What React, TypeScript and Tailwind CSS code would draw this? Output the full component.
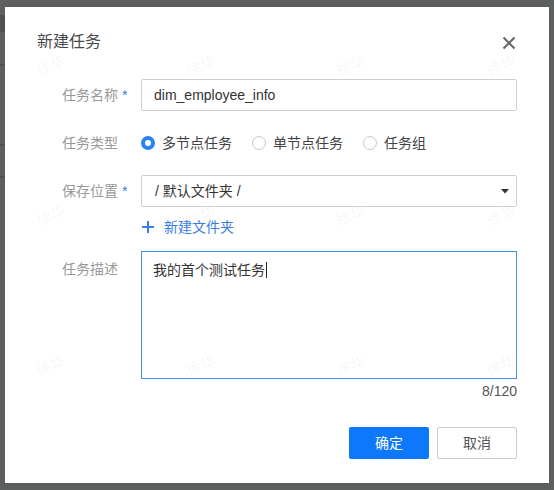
import React from "react";

const font = "font-['Liberation_Sans','Noto_Sans_CJK_SC',sans-serif]";

function Watermarks() {
  const cells = Array.from({ length: 12 });
  return (
    <div className="pointer-events-none absolute left-[-29px] top-[-17px] z-10 grid grid-cols-[repeat(4,150px)] grid-rows-[repeat(3,150px)]">
      {cells.map((_, i) => (
        <div key={i} className="flex items-center justify-center">
          <span className="rotate-[-22deg] text-[15px] leading-none text-[rgba(0,0,0,0.055)]">徐华</span>
        </div>
      ))}
    </div>
  );
}

function Radio({ checked, label }: { checked?: boolean; label: string }) {
  return (
    <div className="flex items-center gap-[7px]">
      {checked ? (
        <span className="box-border h-[14px] w-[14px] rounded-full border-[4px] border-[#2b83f2] bg-white" />
      ) : (
        <span className="box-border h-[14px] w-[14px] rounded-full border border-[#c9c9c9] bg-white" />
      )}
      <span className="text-[14px] text-[#444]">{label}</span>
    </div>
  );
}

function Label({ text, required }: { text: string; required?: boolean }) {
  return (
    <div className="flex w-[79px] shrink-0 items-center text-[14px] leading-[20px] text-[#999]">
      <span>{text}</span>
      {required && <span className="ml-[4px] text-[#2a7ff0]">*</span>}
    </div>
  );
}

export default function App() {
  return (
    <div className={`relative h-[490px] w-[554px] overflow-hidden bg-[#5d5e5e] ${font}`}>
      <div className="flex w-[5px] flex-col">
        <div className="h-[15px] bg-[#5f6060]" />
        <div className="h-[17px] bg-[#4e4f50]" />
        <div className="h-[32px] bg-[#5d5e5e]" />
        <div className="h-[2px] bg-[#4f5050]" />
        <div className="h-[78px] bg-[#5d5e5e]" />
        <div className="h-[2px] bg-[#4f5050]" />
        <div className="h-[30px] bg-[#5d5e5e]" />
        <div className="h-[2px] bg-[#4f5050]" />
      </div>

      <div className="absolute left-[5px] top-[7px] h-[476px] w-[544px] overflow-hidden bg-white">
        <Watermarks />
        <div className="flex flex-col">
          <div className="flex h-[24px] items-center justify-between pl-[32px] pr-[33px] mt-[23px]">
            <span className="text-[16px] leading-[24px] text-[#4a4a4a]">新建任务</span>
            <svg width="14" height="14" viewBox="0 0 14 14" className="mt-[2px]">
              <path d="M1.5 1.5 L12.5 12.5 M12.5 1.5 L1.5 12.5" stroke="#666" strokeWidth="2" fill="none" />
            </svg>
          </div>

          <div className="mt-[25px] flex flex-col pl-[57px]">
            <div className="flex h-[32px] items-center">
              <Label text="任务名称" required />
              <div className="box-border flex h-[32px] w-[376px] items-center rounded-[2px] border border-[#cfcfcf] px-[12px] text-[14px] text-[#333]">
                dim_employee_info
              </div>
            </div>

            <div className="mt-[16px] flex h-[32px] items-center">
              <Label text="任务类型" />
              <div className="flex items-center gap-[20px]">
                <Radio checked label="多节点任务" />
                <Radio label="单节点任务" />
                <Radio label="任务组" />
              </div>
            </div>

            <div className="mt-[16px] flex h-[32px] items-center">
              <Label text="保存位置" required />
              <div className="box-border flex h-[32px] w-[376px] items-center justify-between rounded-[2px] border border-[#cfcfcf] pl-[13px] pr-[7px] text-[14px] text-[#333]">
                <span>/ 默认文件夹 /</span>
                <svg width="8" height="5" viewBox="0 0 8 5">
                  <path d="M0 0 H8 L4 4.5 Z" fill="#333" />
                </svg>
              </div>
            </div>

            <div className="mt-[8px] flex h-[24px] items-center pl-[79px]">
              <svg width="12" height="12" viewBox="0 0 12 12" className="ml-[1px]">
                <path d="M6 0 V12 M0 6 H12" stroke="#3a7de0" strokeWidth="2" fill="none" />
              </svg>
              <span className="ml-[10px] text-[14px] text-[#3a7de0]">新建文件夹</span>
            </div>

            <div className="mt-[12px] flex items-start">
              <div className="mt-[8px]">
                <Label text="任务描述" />
              </div>
              <div className="box-border h-[128px] w-[376px] border border-[#4a92e6] px-[11px] pt-[8px] text-[14px] leading-[20px] text-[#333]">
                <span>我的首个测试任务</span>
                <span className="ml-[1px] inline-block h-[16px] w-px bg-[#222] align-[-3px]" />
              </div>
            </div>

            <div className="mt-[2px] flex w-[455px] justify-end text-[14px] leading-[20px] text-[#555]">8/120</div>

            <div className="mt-[26px] flex w-[455px] justify-end gap-[8px]">
              <div className="flex h-[32px] w-[80px] items-center justify-center rounded-[2px] bg-[#0e78fd] text-[14px] text-white">
                确定
              </div>
              <div className="box-border flex h-[32px] w-[80px] items-center justify-center rounded-[2px] border border-[#cccccc] bg-white text-[14px] text-[#555]">
                取消
              </div>
            </div>
          </div>
        </div>
      </div>
    </div>
  );
}
